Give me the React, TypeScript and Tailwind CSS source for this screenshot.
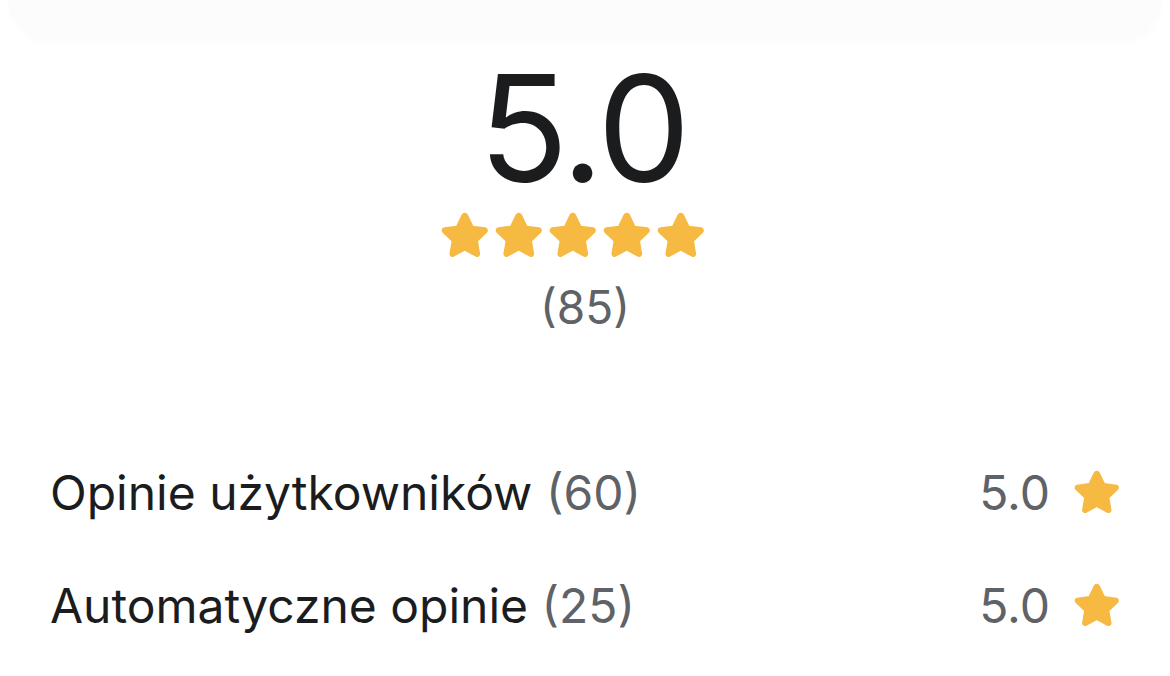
import React from 'react';

const StarIcon = ({ className }: { className?: string }) => (
  <svg viewBox="2 2 20 20" className={className} fill="#F6B942">
    <path
      d="M12 2.6c.4 0 .7.2.9.6l2.3 4.8 5.2.7c.8.1 1.1 1.1.5 1.7l-3.8 3.7.9 5.2c.1.8-.7 1.4-1.5 1l-4.6-2.5-4.6 2.5c-.7.4-1.6-.2-1.5-1l.9-5.2-3.8-3.7c-.6-.6-.3-1.6.5-1.7l5.2-.7 2.3-4.8c.2-.4.6-.6 1-.6z"
      stroke="#F6B942"
      strokeWidth="0.6"
      strokeLinejoin="round"
    />
  </svg>
);

type Source = { label: string; count: number; score: string };

const sources: Source[] = [
  { label: 'Opinie użytkowników', count: 60, score: '5.0' },
  { label: 'Automatyczne opinie', count: 25, score: '5.0' },
];

export default function App() {
  return (
    <div
      className="w-[1170px] h-[676px] bg-white overflow-hidden text-[#1b1c1e]"
      style={{ fontFamily: 'Inter, "Noto Sans", sans-serif' }}
    >
      {/* card edge peeking from above */}
      <div className="h-[42px] mx-[8px] rounded-b-[48px] bg-[#fcfcfc] shadow-[0_3px_10px_rgba(0,0,0,0.01)]" />

      <div className="flex flex-col items-center pt-[13px]">
        <div className="text-[148px] leading-none font-normal tracking-[-3px] pr-[4px]">5.0</div>
        <div className="flex gap-[6px] mt-[9px] mr-[24px]">
          {[0, 1, 2, 3, 4].map((i) => (
            <StarIcon key={i} className="w-[48px] h-[48px]" />
          ))}
        </div>
        <div className="text-[46px] leading-none text-[#5f6266] mt-[24px]">(85)</div>
      </div>

      <div className="flex flex-col px-[50px] mt-[139px] gap-[65px]">
        {sources.map((s) => (
          <div key={s.label} className="flex items-center justify-between h-[48px] text-[48px] leading-none">
            <div>
              {s.label} <span className="text-[#5f6266]">({s.count})</span>
            </div>
            <div className="flex items-center gap-[24px]">
              <span className="text-[#5f6266]">{s.score}</span>
              <StarIcon className="w-[46px] h-[46px]" />
            </div>
          </div>
        ))}
      </div>
    </div>
  );
}
